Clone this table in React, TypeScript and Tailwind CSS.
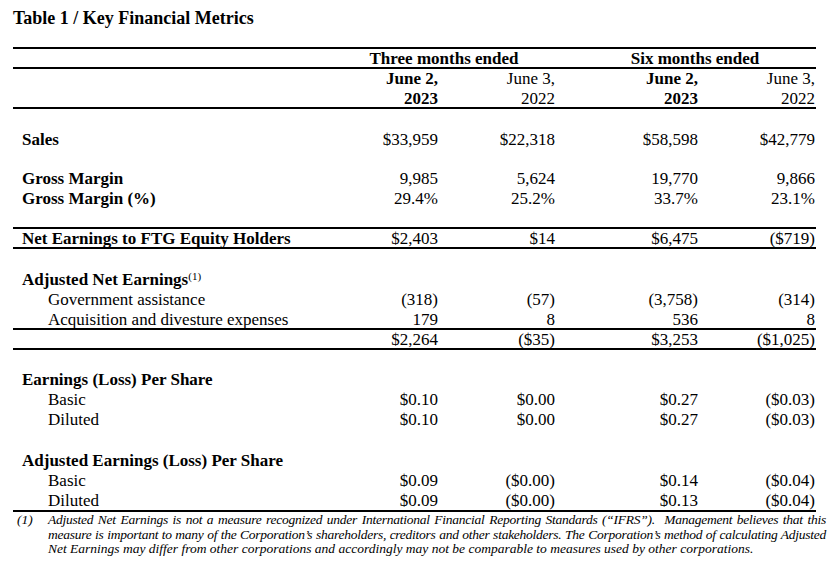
import React from 'react';

type Row = {
  label: React.ReactNode;
  values?: string[];
  bold?: boolean;
  indent?: boolean;
  cls?: string;
};

const grid = 'grid grid-cols-[320px_105px_117px_20px_123px_117px] items-center';

const Line: React.FC<Row> = ({ label, values = [], bold, indent, cls = 'h-5' }) => (
  <div className={`${grid} ${cls}`}>
    <div className={`${indent ? 'pl-[35px]' : 'pl-[9px]'} ${bold ? 'font-bold' : ''} whitespace-nowrap`}>{label}</div>
    <div className="text-right">{values[0]}</div>
    <div className="text-right">{values[1]}</div>
    <div />
    <div className="text-right">{values[2]}</div>
    <div className="text-right">{values[3]}</div>
  </div>
);

const Gap: React.FC<{ h: string }> = ({ h }) => <div className={h} />;

const App: React.FC = () => {
  return (
    <div className="min-h-screen bg-white text-black font-[family-name:Liberation_Serif,Times_New_Roman,serif] text-[17px] leading-5">
      <div className="ml-[13px] w-[803px] pt-[7px]">
        {/* Title */}
        <h1 className="text-[18px] leading-[22px] font-bold">Table 1 / Key Financial Metrics</h1>

        {/* Column headers */}
        <div className="mt-[18px]">
          <div className={`${grid} h-[22px] border-y-2 border-black font-bold`}>
            <div />
            <div className="col-span-2 text-center">Three months ended</div>
            <div />
            <div className="col-span-2 text-center">Six months ended</div>
          </div>
          <div className={`${grid} h-5`}>
            <div />
            <div className="text-right font-bold">June 2,</div>
            <div className="text-right">June 3,</div>
            <div />
            <div className="text-right font-bold">June 2,</div>
            <div className="text-right">June 3,</div>
          </div>
          <div className={`${grid} h-5 border-b-2 border-black`}>
            <div />
            <div className="text-right font-bold">2023</div>
            <div className="text-right">2022</div>
            <div />
            <div className="text-right font-bold">2023</div>
            <div className="text-right">2022</div>
          </div>
        </div>

        <Gap h="h-[21px]" />
        <Line label="Sales" bold values={['$33,959', '$22,318', '$58,598', '$42,779']} />

        <Gap h="h-[18px]" />
        <Line label="Gross Margin" bold cls="h-[21px]" values={['9,985', '5,624', '19,770', '9,866']} />
        <Line label="Gross Margin (%)" bold values={['29.4%', '25.2%', '33.7%', '23.1%']} />

        <Gap h="h-[18px]" />
        <Line
          label="Net Earnings to FTG Equity Holders"
          bold
          cls="h-[22px] border-y-2 border-black"
          values={['$2,403', '$14', '$6,475', '($719)']}
        />

        <Gap h="h-[21px]" />
        <Line
          label={
            <>
              Adjusted Net Earnings<sup className="text-[11px] font-normal">(1)</sup>
            </>
          }
          bold
        />
        <Line label="Government assistance" indent values={['(318)', '(57)', '(3,758)', '(314)']} />
        <Line label="Acquisition and divesture expenses" indent cls="h-[18px]" values={['179', '8', '536', '8']} />
        <Line label="" cls="h-[22px] border-y-2 border-black" values={['$2,264', '($35)', '$3,253', '($1,025)']} />

        <Gap h="h-5" />
        <Line label="Earnings (Loss) Per Share" bold />
        <Line label="Basic" indent values={['$0.10', '$0.00', '$0.27', '($0.03)']} />
        <Line label="Diluted" indent values={['$0.10', '$0.00', '$0.27', '($0.03)']} />

        <Gap h="h-[21px]" />
        <Line label="Adjusted Earnings (Loss) Per Share" bold />
        <Line label="Basic" indent values={['$0.09', '($0.00)', '$0.14', '($0.04)']} />
        <Line label="Diluted" indent cls="h-[21px] border-b-2 border-black" values={['$0.09', '($0.00)', '$0.13', '($0.04)']} />
      </div>

      {/* Footnote */}
      <div className="ml-[13px] w-[813px] grid grid-cols-[35px_1fr] italic text-[13.5px] leading-[14.5px] pt-[1px]">
        <div className="pl-[4px]">(1)</div>
        <div>
          <p className="text-justify [text-align-last:justify] tracking-[-0.25px]">
            Adjusted Net Earnings is not a measure recognized under International Financial Reporting Standards (“IFRS”).&nbsp; Management believes that this
          </p>
          <p className="text-justify [text-align-last:justify] tracking-[-0.25px]">
            measure is important to many of the Corporation’s shareholders, creditors and other stakeholders. The Corporation’s method of calculating Adjusted
          </p>
          <p className="whitespace-nowrap">
            Net Earnings may differ from other corporations and accordingly may not be comparable to measures used by other corporations.
          </p>
        </div>
      </div>
    </div>
  );
};

export default App;
